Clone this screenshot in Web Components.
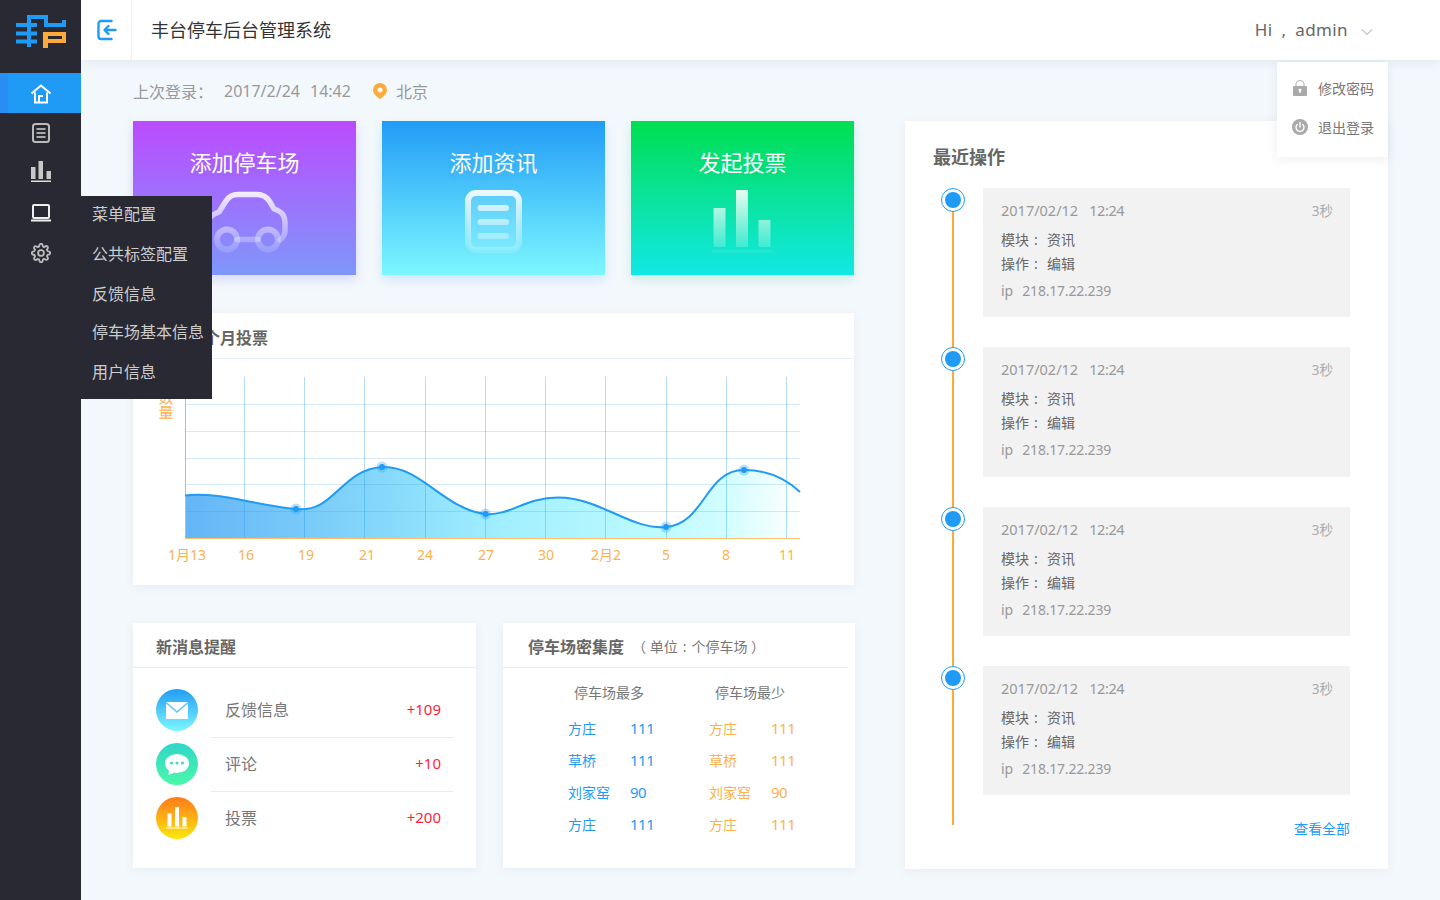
<!DOCTYPE html>
<html lang="zh">
<head>
<meta charset="utf-8">
<title>丰台停车后台管理系统</title>
<style>
  html, body { margin: 0; height: 100%; }
  body {
    width: 1440px;
    height: 900px;
    overflow: hidden;
    display: flex;
    background: #f3f8fc;
    font: 14px "Noto Sans", "Noto Sans CJK SC", sans-serif;
    color: #666;
  }
  .main { flex: 1; display: flex; flex-direction: column; min-width: 0; }
  .content { flex: 1; display: flex; gap: 50px; padding-left: 52px; }
  .left { width: 722px; }
  .tiles { display: flex; gap: 26px; }
  .bottom { display: flex; gap: 27px; margin-top: 38px; }
</style>
</head>
<body>
<app-sidebar></app-sidebar>
<div class="main">
  <app-header></app-header>
  <div class="content">
    <div class="left">
      <login-info></login-info>
      <div class="tiles">
        <action-tile label="添加停车场" from="#bb4bff" to="#7f97fb" shade="rgba(130,110,250,.22)">
          <svg width="223" height="94" viewBox="0 0 223 94" fill="none">
            <defs><linearGradient id="g" gradientUnits="userSpaceOnUse" x1="0" y1="10" x2="0" y2="70"><stop offset="0" stop-color="#fff" stop-opacity=".9"/><stop offset="1" stop-color="#fff" stop-opacity=".15"/></linearGradient></defs>
            <path d="M76 58C70 50 70 37 86 31L93 20C96 15 100 13.500 105 13.500H124C130 13.500 134 16 137 21L141 28C150 31 152 35 152 43V49C152 54 150 57 147 59M104 58.500H125" stroke="url(#g)" stroke-width="5.500" stroke-linecap="round" stroke-linejoin="round"/>
            <circle cx="94" cy="58.500" r="10" stroke="url(#g)" stroke-width="6"/>
            <circle cx="135" cy="58.500" r="10" stroke="url(#g)" stroke-width="6"/>
          </svg>
        </action-tile>
        <action-tile label="添加资讯" from="#219cf6" to="#7cf7ff" shade="rgba(80,170,250,.22)">
          <svg width="223" height="94" viewBox="0 0 223 94" fill="none">
            <defs><linearGradient id="g" gradientUnits="userSpaceOnUse" x1="0" y1="9" x2="0" y2="72"><stop offset="0" stop-color="#fff" stop-opacity=".95"/><stop offset="1" stop-color="#fff" stop-opacity=".18"/></linearGradient></defs>
            <rect x="86" y="12" width="51" height="57" rx="8" fill="#fff" fill-opacity=".1" stroke="url(#g)" stroke-width="6"/>
            <path d="M98.500 27H124M98.500 41H124M98.500 55H124" stroke="url(#g)" stroke-width="6" stroke-linecap="round"/>
          </svg>
        </action-tile>
        <action-tile label="发起投票" from="#00de51" to="#12e8e6" shade="rgba(40,200,150,.2)">
          <svg width="223" height="94" viewBox="0 0 223 94">
            <defs><linearGradient id="g" gradientUnits="userSpaceOnUse" x1="0" y1="9" x2="0" y2="66"><stop offset="0" stop-color="#fff"/><stop offset="1" stop-color="#fff" stop-opacity=".15"/></linearGradient></defs>
            <rect x="82.500" y="27" width="12" height="39" fill="url(#g)"/>
            <rect x="105" y="9" width="12" height="57" fill="url(#g)"/>
            <rect x="127.500" y="39" width="12" height="27" fill="url(#g)"/>
            <rect x="81" y="69" width="60" height="3" fill="#fff" fill-opacity=".08"/>
          </svg>
        </action-tile>
      </div>
      <vote-chart></vote-chart>
      <div class="bottom">
        <message-panel></message-panel>
        <density-panel></density-panel>
      </div>
    </div>
    <timeline-panel></timeline-panel>
  </div>
</div>

<script>
class AppSidebar extends HTMLElement {
  constructor() {
    super();
    this.attachShadow({ mode: 'open' }).innerHTML = `
      <style>
        :host { display: block; width: 81px; height: 900px; flex: none; background: #282933; position: relative; z-index: 3; }
        .logo { height: 73px; display: flex; }
        .menu { display: flex; flex-direction: column; }
        .item { height: 40px; display: flex; align-items: center; justify-content: center; }
        .item.active { background: #1f9bf5; border-left: 8px solid #2b8cf3; box-sizing: border-box; padding-right: 8px; }
        .fly {
          position: absolute; left: 81px; top: 196px; width: 131px; height: 203px;
          background: #282933; color: #ccc; font-size: 16px;
          display: flex; flex-direction: column; white-space: nowrap;
        }
        .fly div { height: 40px; line-height: 37px; padding-left: 11px; }
        .fly div:nth-child(4) { height: 39px; line-height: 33px; }
        .fly div:nth-child(5) { line-height: 35px; }
      </style>
      <div class="logo">
        <svg width="81" height="73" viewBox="0 0 81 73">
          <path fill="#1f9bf5" d="M27 15H48V23H62V20H66V27H44V19H31V23H37V27H31V31.500H37V35.500H31V39.500H37V43.500H31V47H27V43.500H16V39.500H27V35.500H16V31.500H27V27H16V23H27Z"/>
          <path fill="#fdaa3a" d="M43 32H66V43H48V48H43ZM48 36V39H62V36Z"/>
        </svg>
      </div>
      <div class="menu">
        <div class="item active">
          <svg width="22" height="20" viewBox="0 0 22 20" fill="none" stroke="#fff" stroke-width="2" style="margin-top:2px">
            <path d="M1.500 9.500L11 1.500L20.500 9.500M5 8.500V18.500H17V8.500M9 18V12H13"/>
          </svg>
        </div>
        <div class="item">
          <svg width="20" height="22" viewBox="0 0 20 22" fill="none" stroke="#bbb" stroke-width="2">
            <rect x="2" y="2" width="16" height="18" rx="2.500"/>
            <path d="M5.500 7H14.500M5.500 11H14.500M5.500 15H14.500" stroke="#aaa"/>
          </svg>
        </div>
        <div class="item">
          <svg width="20" height="22" viewBox="0 0 20 22" style="margin-top:-2px">
            <rect x="0" y="6" width="4.500" height="12" fill="#c8c8c8"/>
            <rect x="7.500" y="0" width="4.500" height="18" fill="#c8c8c8"/>
            <rect x="15.500" y="10" width="4.500" height="8" fill="#c8c8c8"/>
            <rect x="0" y="19.500" width="20" height="1.500" fill="#ddd"/>
          </svg>
        </div>
        <div class="item">
          <svg width="20" height="18" viewBox="0 0 20 18" fill="none" stroke="#eee" stroke-width="2">
            <rect x="2" y="1" width="16" height="13" rx="1"/>
            <path d="M0 16.500H20" />
          </svg>
        </div>
        <div class="item">
          <svg width="20" height="20" viewBox="0 0 24 24" fill="none" stroke="#bbb" stroke-width="2.200">
            <circle cx="12" cy="12" r="3.500"/>
            <path d="M19.400 15a1.650 1.650 0 0 0 .33 1.820l.06.06a2 2 0 0 1 0 2.830 2 2 0 0 1-2.830 0l-.06-.06a1.650 1.650 0 0 0-1.820-.33 1.650 1.650 0 0 0-1 1.510V21a2 2 0 0 1-2 2 2 2 0 0 1-2-2v-.09A1.650 1.650 0 0 0 9 19.400a1.650 1.650 0 0 0-1.820.33l-.06.06a2 2 0 0 1-2.830 0 2 2 0 0 1 0-2.830l.06-.06a1.650 1.650 0 0 0 .33-1.820 1.650 1.650 0 0 0-1.510-1H3a2 2 0 0 1-2-2 2 2 0 0 1 2-2h.09A1.650 1.650 0 0 0 4.600 9a1.650 1.650 0 0 0-.33-1.820l-.06-.06a2 2 0 0 1 0-2.830 2 2 0 0 1 2.830 0l.06.06a1.650 1.650 0 0 0 1.820.33H9a1.650 1.650 0 0 0 1-1.510V3a2 2 0 0 1 2-2 2 2 0 0 1 2 2v.09a1.650 1.650 0 0 0 1 1.510 1.650 1.650 0 0 0 1.820-.33l.06-.06a2 2 0 0 1 2.830 0 2 2 0 0 1 0 2.830l-.06.06a1.650 1.650 0 0 0-.33 1.820V9a1.650 1.650 0 0 0 1.510 1H21a2 2 0 0 1 2 2 2 2 0 0 1-2 2h-.09a1.650 1.650 0 0 0-1.510 1z"/>
          </svg>
        </div>
      </div>
      <div class="fly">
        <div>菜单配置</div>
        <div>公共标签配置</div>
        <div>反馈信息</div>
        <div>停车场基本信息</div>
        <div>用户信息</div>
      </div>
    `;
  }
}
customElements.define('app-sidebar', AppSidebar);

class AppHeader extends HTMLElement {
  constructor() {
    super();
    this.attachShadow({ mode: 'open' }).innerHTML = `
      <style>
        :host {
          display: flex; align-items: center; height: 60px; flex: none;
          background: #fff; position: relative; z-index: 2;
          box-shadow: 0 2px 10px rgba(60,90,130,.1);
        }
        .toggle { width: 50px; height: 60px; border-right: 1px solid #eee; display: flex; align-items: center; justify-content: center; }
        .toggle svg { margin-left: 2px; }
        h1 { margin: -2px 0 0 19px; font-size: 18px; font-weight: 400; color: #333; flex: 1; }
        .user { font-size: 17px; color: #666; letter-spacing: .4px; word-spacing: 4px; margin-right: 13px; margin-top: -1px; }
        .caret { margin-right: 67px; margin-top: 4px; }
        .drop {
          position: absolute; left: 1196px; top: 62px; width: 111px; height: 95px;
          background: #fff; box-shadow: 0 2px 10px rgba(60,90,130,.1);
          box-sizing: border-box; padding-top: 6px;
        }
        .row { height: 39px; display: flex; align-items: center; font-size: 14px; color: #777; white-space: nowrap; }
        .row svg { margin: 0 10px 0 15px; flex: none; }
      </style>
      <div class="toggle">
        <svg width="20" height="22" viewBox="0 0 20 22" fill="none" stroke="#1f9bf5" stroke-width="2.400" stroke-linecap="round" stroke-linejoin="round">
          <path d="M14.500 2H4A2.500 2.500 0 0 0 1.500 4.500V17.500A2.500 2.500 0 0 0 4 20H14.500M18.500 11H8M11.500 7L7.500 11L11.500 15"/>
        </svg>
      </div>
      <h1>丰台停车后台管理系统</h1>
      <div class="user">Hi , admin</div>
      <svg class="caret" width="12" height="8" viewBox="0 0 12 8" fill="none" stroke="#ccc" stroke-width="1.500"><path d="M1 1.500L6 6.500L11 1.500"/></svg>
      <div class="drop">
        <div class="row">
          <svg width="16" height="16" viewBox="0 0 16 16">
            <path d="M4 7V4.500A4 4 0 0 1 12 4.500V7" fill="none" stroke="#c4c4c4" stroke-width="1.300"/>
            <rect x="1" y="6" width="14" height="10" rx="1" fill="#aaa"/>
            <circle cx="8" cy="10" r="1.500" fill="#fff"/><rect x="7.400" y="10" width="1.200" height="3" fill="#fff"/>
          </svg>
          修改密码
        </div>
        <div class="row">
          <svg width="16" height="16" viewBox="0 0 16 16" fill="none">
            <circle cx="8" cy="8" r="8" fill="#aaa"/>
            <path d="M5.300 5.500A4 4 0 1 0 10.700 5.500" stroke="#fff" stroke-width="1.400" stroke-linecap="round"/>
            <path d="M8 3.500V8" stroke="#fff" stroke-width="1.400" stroke-linecap="round"/>
          </svg>
          退出登录
        </div>
      </div>
    `;
  }
}
customElements.define('app-header', AppHeader);

class LoginInfo extends HTMLElement {
  constructor() {
    super();
    this.attachShadow({ mode: 'open' }).innerHTML = `
      <style>
        :host { display: flex; align-items: center; height: 61px; box-sizing: border-box; font-size: 16px; color: #999; white-space: nowrap; }
        .date { margin-left: 11px; }
        .time { margin-left: 10px; }
        svg { margin: 0 9px 0 22px; }
      </style>
      <span>上次登录：</span>
      <span class="date">2017/2/24</span>
      <span class="time">14:42</span>
      <svg width="14" height="16" viewBox="0 0 14 16">
        <path fill="#fdaa3a" d="M7 0A7 7 0 0 1 14 7C14 11 10 14 7 16C4 14 0 11 0 7A7 7 0 0 1 7 0Z"/>
        <circle cx="7" cy="7" r="2.500" fill="#fff"/>
      </svg>
      <span>北京</span>
    `;
  }
}
customElements.define('login-info', LoginInfo);

class ActionTile extends HTMLElement {
  constructor() {
    super();
    const from = this.getAttribute('from');
    const to = this.getAttribute('to');
    const shade = this.getAttribute('shade');
    this.attachShadow({ mode: 'open' }).innerHTML = `
      <style>
        :host {
          display: flex; flex-direction: column; align-items: center;
          width: 223px; height: 154px;
          background: linear-gradient(${from}, ${to});
          box-shadow: 0 5px 10px ${shade};
          overflow: hidden;
        }
        h2 { margin: 0; height: 60px; line-height: 83px; font-size: 22px; font-weight: 400; color: #fff; text-shadow: 0 4px 8px rgba(0,0,0,.06); }
        ::slotted(svg) { display: block; flex: none; }
      </style>
      <h2>${this.getAttribute('label')}</h2>
      <slot></slot>
    `;
  }
}
customElements.define('action-tile', ActionTile);

class PanelCard extends HTMLElement {
  constructor() {
    super();
    this.attachShadow({ mode: 'open' }).innerHTML = `
      <style>
        :host { display: flex; flex-direction: column; background: #fff; box-shadow: 0 2px 10px rgba(60,90,130,.07); }
        .head {
          height: var(--head-h, 44px); line-height: var(--head-lh, 48px); flex: none;
          padding-left: var(--head-pad, 23px); margin-right: var(--head-trim, 0);
          font-size: 16px; font-weight: 700; color: #666; white-space: nowrap;
          border-bottom: 1px solid #e6eef5;
        }
      </style>
      <div class="head">${this.getAttribute('heading')}<slot name="note"></slot></div>
      <slot></slot>
    `;
  }
}
customElements.define('panel-card', PanelCard);

class VoteChart extends HTMLElement {
  constructor() {
    super();
    const vx = [244.5, 304.5, 364.5, 425.5, 485.5, 545.5, 605.5, 666.5, 726.5, 786.5];
    const hy = [404.5, 431.5, 458.5, 484.5, 511.5];
    const labels = [['1月13', 187], ['16', 246], ['19', 306], ['21', 367], ['24', 425], ['27', 486], ['30', 546], ['2月2', 606], ['5', 666], ['8', 726], ['11', 787]];
    const dots = [[296, 509], [382, 467], [485.6, 514], [666, 527], [744, 470]];
    const curve = 'M185 495.5C215 491 255 505 296 509C335 513 340 470 382 467C420 465 445 510 485.6 514C510 516 525 497.5 558 497.5C600 497.5 630 530 666 527C705 524 705 470 744 470C765 470 785 478 800 492';
    this.attachShadow({ mode: 'open' }).innerHTML = `
      <style>
        :host { display: block; margin-top: 38px; width: 721px; --head-h: 45px; --head-lh: 51px; }
        panel-card { height: 272px; }
        svg { display: block; }
        text { font-size: 14px; fill: #fdb14c; text-anchor: middle; }
        .axis { font-size: 15px; }
      </style>
      <panel-card heading="最近一个月投票">
        <svg width="721" height="226" viewBox="133 359 721 226">
          <defs>
            <linearGradient id="area" gradientUnits="userSpaceOnUse" x1="185" y1="0" x2="800" y2="0">
              <stop offset="0" stop-color="#64b5f6"/>
              <stop offset=".32" stop-color="#86d8fb"/>
              <stop offset=".5" stop-color="#9feeff"/>
              <stop offset=".78" stop-color="#bffbff"/>
              <stop offset=".88" stop-color="#d2fdff"/>
              <stop offset="1" stop-color="#fff"/>
            </linearGradient>
          </defs>
          <path d="${curve}V539H185Z" fill="url(#area)"/>
          ${hy.map(y => `<path d="M185 ${y}H800" stroke="#3c96d2" stroke-opacity=".22"/>`).join('')}
          ${vx.map(x => `<path d="M${x} 377V539" stroke="#1f9bf5" stroke-opacity=".35"/>`).join('')}
          <path d="M185.500 377V539" stroke="#fdb14c"/>
          <path d="M185 538.500H800" stroke="#fdc06e"/>
          <path d="${curve}" fill="none" stroke="#1f9bf5" stroke-width="2"/>
          ${dots.map(d => `<circle cx="${d[0]}" cy="${d[1]}" r="5.500" fill="#1f9bf5" fill-opacity=".3"/><circle cx="${d[0]}" cy="${d[1]}" r="3" fill="#1f9bf5"/>`).join('')}
          <text class="axis" x="166" y="403">数</text>
          <text class="axis" x="166" y="418">量</text>
          ${labels.map(l => `<text x="${l[1]}" y="560">${l[0]}</text>`).join('')}
        </svg>
      </panel-card>
    `;
  }
}
customElements.define('vote-chart', VoteChart);

class MessagePanel extends HTMLElement {
  constructor() {
    super();
    const icons = [
      `<svg width="42" height="42" viewBox="0 0 42 42"><defs><linearGradient id="a" x1="0" y1="0" x2="0" y2="1"><stop offset="0" stop-color="#219cf6"/><stop offset="1" stop-color="#7cf7ff"/></linearGradient></defs><circle cx="21" cy="21" r="21" fill="url(#a)"/><rect x="10" y="13" width="22" height="17" fill="#fff"/><path d="M10 13.500L21 23L32 13.500" fill="none" stroke="#5cc4fa" stroke-width="1.500"/></svg>`,
      `<svg width="42" height="42" viewBox="0 0 42 42"><defs><linearGradient id="b" x1="0" y1="0" x2="0" y2="1"><stop offset="0" stop-color="#2fd6c8"/><stop offset="1" stop-color="#4af8a8"/></linearGradient></defs><circle cx="21" cy="21" r="21" fill="url(#b)"/><ellipse cx="21" cy="20.500" rx="12" ry="9.500" fill="#fff"/><path d="M13 26L12.500 32L20 29Z" fill="#fff"/><circle cx="15.500" cy="20" r="1.600" fill="#3be0bd"/><circle cx="21" cy="20" r="1.600" fill="#3be0bd"/><circle cx="26.500" cy="20" r="1.600" fill="#3be0bd"/></svg>`,
      `<svg width="42" height="42" viewBox="0 0 42 42"><defs><linearGradient id="c" x1="0" y1="0" x2="0" y2="1"><stop offset="0" stop-color="#ff7a1a"/><stop offset="1" stop-color="#fbe80c"/></linearGradient></defs><circle cx="21" cy="21" r="21" fill="url(#c)"/><rect x="11.500" y="16.500" width="4" height="13" fill="#fff"/><rect x="19" y="10" width="4" height="19.500" fill="#fff"/><rect x="26.500" y="20" width="4" height="9.500" fill="#fff"/><rect x="10" y="30.500" width="22" height="1" fill="#fff"/></svg>`
    ];
    const rows = [['反馈信息', '+109'], ['评论', '+10'], ['投票', '+200']];
    this.attachShadow({ mode: 'open' }).innerHTML = `
      <style>
        :host { display: block; width: 343px; }
        panel-card { height: 245px; }
        .list { padding: 16px 22px 0 23px; }
        .row { display: flex; height: 54px; align-items: center; }
        .row svg { flex: none; display: block; margin-top: -2px; }
        .body {
          flex: 1; height: 54px; margin-left: 12px; padding: 0 13px 4px 15px; box-sizing: border-box;
          display: flex; align-items: center; justify-content: space-between;
          font-size: 16px; color: #777; border-bottom: 1px solid #e8edf1;
        }
        .row:last-child .body { border-bottom: 0; }
        b { font-weight: 400; color: #ff1e3c; font-size: 15px; }
      </style>
      <panel-card heading="新消息提醒">
        <div class="list">
          ${rows.map((r, i) => `<div class="row">${icons[i]}<div class="body"><span>${r[0]}</span><b>${r[1]}</b></div></div>`).join('')}
        </div>
      </panel-card>
    `;
  }
}
customElements.define('message-panel', MessagePanel);

class DensityPanel extends HTMLElement {
  constructor() {
    super();
    const rows = [['方庄', 111], ['草桥', 111], ['刘家窑', 90], ['方庄', 111]];
    const col = (title, tone) => `
      <div class="col" style="color:${tone}">
        <div class="title">${title}</div>
        ${rows.map(r => `<div class="line"><span>${r[0]}</span><span class="num">${r[1]}</span></div>`).join('')}
      </div>`;
    this.attachShadow({ mode: 'open' }).innerHTML = `
      <style>
        :host { display: block; width: 352px; --head-pad: 25px; --head-trim: 7px; }
        panel-card { height: 245px; }
        .note { font-size: 14px; font-weight: 400; color: #777; margin-left: 8px; vertical-align: 1px; }
        .note i { font-style: normal; margin: 0 5px; }
        .cols { display: flex; padding: 7px 0 0 65px; }
        .col { width: 141px; font-size: 14px; }
        .title { width: 82px; height: 36px; line-height: 36px; text-align: center; color: #777; white-space: nowrap; margin-bottom: 1px; }
        .line { display: flex; height: 32px; align-items: center; }
        .line span:first-child { width: 62px; }
        .num { font-size: 15px; letter-spacing: -.5px; }
      </style>
      <panel-card heading="停车场密集度">
        <span class="note" slot="note">（ 单位<i>:</i>个停车场 ）</span>
        <div class="cols">
          ${col('停车场最多', '#1f9bf5')}
          ${col('停车场最少', '#fdb14c')}
        </div>
      </panel-card>
    `;
  }
}
customElements.define('density-panel', DensityPanel);

class LogEntry extends HTMLElement {
  constructor() {
    super();
    this.attachShadow({ mode: 'open' }).innerHTML = `
      <style>
        :host { display: flex; }
        .rail { width: 24px; flex: none; display: flex; flex-direction: column; align-items: center; margin-right: 18px; }
        .dot { width: 24px; height: 24px; box-sizing: border-box; border: 1px solid #1f9bf5; border-radius: 50%; padding: 3px; flex: none; }
        .dot::before { content: ''; display: block; width: 16px; height: 16px; border-radius: 50%; background: #1f9bf5; }
        .line { width: 2px; flex: 1; background: #fdaa3a; }
        .wrap { flex: 1; padding-bottom: 30px; }
        .box { height: 129.300px; box-sizing: border-box; background: #f2f2f2; padding: 11px 17px 0 18px; font-size: 14px; color: #666; }
        .top { display: flex; justify-content: space-between; line-height: 22px; color: #999; margin-bottom: 6px; }
        .top > span { color: #aaa; font-size: 13.500px; margin-top: 1px; }
        .when { font-size: 14.500px; }
        .when span { margin-left: 11px; letter-spacing: -.4px; }
        .txt { line-height: 24px; }
        .txt i { display: inline-block; width: 13px; padding-left: 5px; font-style: normal; }
        .ip { line-height: 24px; color: #999; margin-top: 3px; letter-spacing: -.2px; word-spacing: 6px; }
      </style>
      <div class="rail"><div class="dot"></div><div class="line"></div></div>
      <div class="wrap">
        <div class="box">
          <div class="top"><div class="when">2017/02/12<span>12:24</span></div><span>3秒</span></div>
          <div class="txt">模块<i>:</i>资讯</div>
          <div class="txt">操作<i>:</i>编辑</div>
          <div class="ip">ip 218.17.22.239</div>
        </div>
      </div>
    `;
  }
}
customElements.define('log-entry', LogEntry);

class TimelinePanel extends HTMLElement {
  constructor() {
    super();
    this.attachShadow({ mode: 'open' }).innerHTML = `
      <style>
        :host { display: block; width: 483px; height: 748px; margin-top: 61px; background: #fff; box-shadow: 0 2px 10px rgba(60,90,130,.07); }
        h3 { margin: 0; padding: 21px 0 0 28px; height: 46px; line-height: 30px; font-size: 18px; font-weight: 700; color: #666; }
        .list { padding: 0 38px 0 36px; }
        .all { display: block; text-align: right; margin: -6px 38px 0 0; font-size: 14px; line-height: 20px; color: #1f9bf5; }
      </style>
      <h3>最近操作</h3>
      <div class="list">
        <log-entry></log-entry>
        <log-entry></log-entry>
        <log-entry></log-entry>
        <log-entry></log-entry>
      </div>
      <div class="all">查看全部</div>
    `;
  }
}
customElements.define('timeline-panel', TimelinePanel);
</script>
</body>
</html>
